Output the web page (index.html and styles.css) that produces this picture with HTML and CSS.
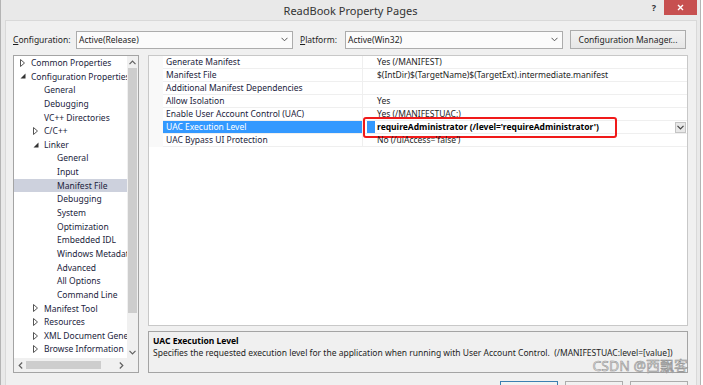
FILE: index.html
```html
<!DOCTYPE html>
<html lang="en">
<head>
  <meta charset="UTF-8" />
  <title>ReadBook Property Pages</title>
  <link rel="stylesheet" href="styles.css">
</head>
<body>

<div class="window">
  <!-- Title bar -->
  <div class="titlebar">
    <span class="title">ReadBook Property Pages</span>
    <div class="controls">
      <span class="help">?</span>
      <span class="close">
        <svg width="7" height="7" viewBox="0 0 7 7"><path d="M1 1 L6 6 M6 1 L1 6" stroke="#fff" stroke-width="1.4"/></svg>
      </span>
    </div>
  </div>

  <div class="client">
    <!-- Configuration row -->
    <div class="config-row">
      <label class="cfg-label"><u>C</u>onfiguration:</label>
      <div class="select cfg-select">
        <span>Active(Release)</span>
        <svg width="7" height="5" viewBox="0 0 7 5"><polyline points="0.5,0.8 3.5,3.8 6.5,0.8" fill="none" stroke="#555" stroke-width="1"/></svg>
      </div>
      <label class="plat-label"><u>P</u>latform:</label>
      <div class="select plat-select">
        <span>Active(Win32)</span>
        <svg width="7" height="5" viewBox="0 0 7 5"><polyline points="0.5,0.8 3.5,3.8 6.5,0.8" fill="none" stroke="#555" stroke-width="1"/></svg>
      </div>
      <button class="cfg-btn">Configuration Manager...</button>
    </div>

    <div class="main">
      <!-- Tree -->
      <div class="tree">
        <div class="tree-body">
          <ul class="tree-items">
            <li class="lv0"><span class="tw"><svg width="5" height="8" viewBox="0 0 5 8"><polygon points="0.5,0.5 4.5,4 0.5,7.5" fill="none" stroke="#555"/></svg></span>Common Properties</li>
            <li class="lv0"><span class="tw"><svg width="6" height="6" viewBox="0 0 6 6"><polygon points="5.5,0.5 5.5,5.5 0.5,5.5" fill="#333"/></svg></span>Configuration Properties</li>
            <li class="lv1"><span class="tw"></span>General</li>
            <li class="lv1"><span class="tw"></span>Debugging</li>
            <li class="lv1"><span class="tw"></span>VC++ Directories</li>
            <li class="lv1"><span class="tw"><svg width="5" height="8" viewBox="0 0 5 8"><polygon points="0.5,0.5 4.5,4 0.5,7.5" fill="none" stroke="#555"/></svg></span>C/C++</li>
            <li class="lv1"><span class="tw"><svg width="6" height="6" viewBox="0 0 6 6"><polygon points="5.5,0.5 5.5,5.5 0.5,5.5" fill="#333"/></svg></span>Linker</li>
            <li class="lv2"><span class="tw"></span>General</li>
            <li class="lv2"><span class="tw"></span>Input</li>
            <li class="lv2 active"><span class="tw"></span>Manifest File</li>
            <li class="lv2"><span class="tw"></span>Debugging</li>
            <li class="lv2"><span class="tw"></span>System</li>
            <li class="lv2"><span class="tw"></span>Optimization</li>
            <li class="lv2"><span class="tw"></span>Embedded IDL</li>
            <li class="lv2"><span class="tw"></span>Windows Metadata</li>
            <li class="lv2"><span class="tw"></span>Advanced</li>
            <li class="lv2"><span class="tw"></span>All Options</li>
            <li class="lv2"><span class="tw"></span>Command Line</li>
            <li class="lv1"><span class="tw"><svg width="5" height="8" viewBox="0 0 5 8"><polygon points="0.5,0.5 4.5,4 0.5,7.5" fill="none" stroke="#555"/></svg></span>Manifest Tool</li>
            <li class="lv1"><span class="tw"><svg width="5" height="8" viewBox="0 0 5 8"><polygon points="0.5,0.5 4.5,4 0.5,7.5" fill="none" stroke="#555"/></svg></span>Resources</li>
            <li class="lv1"><span class="tw"><svg width="5" height="8" viewBox="0 0 5 8"><polygon points="0.5,0.5 4.5,4 0.5,7.5" fill="none" stroke="#555"/></svg></span>XML Document Generator</li>
            <li class="lv1"><span class="tw"><svg width="5" height="8" viewBox="0 0 5 8"><polygon points="0.5,0.5 4.5,4 0.5,7.5" fill="none" stroke="#555"/></svg></span>Browse Information</li>
          </ul>
          <div class="vscroll">
            <div class="arrow"><svg width="7" height="5" viewBox="0 0 7 5"><polyline points="0.5,4.2 3.5,1.2 6.5,4.2" fill="none" stroke="#606060" stroke-width="1.2"/></svg></div>
            <div class="vthumb"></div>
            <div class="track"></div>
            <div class="arrow"><svg width="7" height="5" viewBox="0 0 7 5"><polyline points="0.5,0.8 3.5,3.8 6.5,0.8" fill="none" stroke="#606060" stroke-width="1.2"/></svg></div>
          </div>
        </div>
        <div class="hscroll-row">
          <div class="hscroll">
            <div class="harrow"><svg width="5" height="7" viewBox="0 0 5 7"><polyline points="4.2,0.5 1.2,3.5 4.2,6.5" fill="none" stroke="#606060" stroke-width="1.2"/></svg></div>
            <div class="hthumb"></div>
            <div class="track"></div>
            <div class="harrow"><svg width="5" height="7" viewBox="0 0 5 7"><polyline points="0.8,0.5 3.8,3.5 0.8,6.5" fill="none" stroke="#606060" stroke-width="1.2"/></svg></div>
          </div>
          <div class="corner"></div>
        </div>
      </div>

      <!-- Property grid + description -->
      <div class="right">
        <div class="grid">
          <div class="row"><div class="gutter"></div><div class="name">Generate Manifest</div><div class="value">Yes (/MANIFEST)</div></div>
          <div class="row"><div class="gutter"></div><div class="name">Manifest File</div><div class="value">$(IntDir)$(TargetName)$(TargetExt).intermediate.manifest</div></div>
          <div class="row"><div class="gutter"></div><div class="name">Additional Manifest Dependencies</div><div class="value"></div></div>
          <div class="row"><div class="gutter"></div><div class="name">Allow Isolation</div><div class="value">Yes</div></div>
          <div class="row"><div class="gutter"></div><div class="name">Enable User Account Control (UAC)</div><div class="value">Yes (/MANIFESTUAC:)</div></div>
          <div class="row selected">
            <div class="gutter"></div>
            <div class="name">UAC Execution Level</div>
            <div class="value">
              <span class="caret"></span>
              <span class="strong">requireAdministrator (/level='requireAdministrator')</span>
              <span class="drop"><svg width="7" height="5" viewBox="0 0 7 5"><polyline points="0.5,0.8 3.5,3.8 6.5,0.8" fill="none" stroke="#444" stroke-width="1.2"/></svg></span>
              <span class="redbox"></span>
            </div>
          </div>
          <div class="row"><div class="gutter"></div><div class="name">UAC Bypass UI Protection</div><div class="value">No (/uiAccess='false')</div></div>
        </div>
        <div class="desc">
          <div class="desc-title">UAC Execution Level</div>
          <div>Specifies the requested execution level for the application when running with User Account Control.&nbsp; (/MANIFESTUAC:level=[value])</div>
        </div>
      </div>
    </div>

    <div class="buttons">
      <button class="dlg-btn default">OK</button>
      <button class="dlg-btn">Cancel</button>
      <button class="dlg-btn">Apply</button>
    </div>
  </div>

  <div class="watermark">CSDN @西飘客</div>
</div>

</body>
</html>
```

FILE: styles.css
```css
* {
  margin: 0;
  padding: 0;
  box-sizing: border-box;
}

body {
  width: 703px;
  height: 385px;
  overflow: hidden;
  background: #fff;
  font-family: "Noto Sans", "Noto Sans CJK SC", sans-serif;
  font-size: 8.5px;
  color: #1e1e1e;
}

.window {
  position: relative;
  width: 701px;
  height: 385px;
  background: #e9e9e9;
  border-left: 1px solid #b4b4b4;
  border-right: 1px solid #b4b4b4;
  display: flex;
  flex-direction: column;
}

/* title bar */
.titlebar {
  height: 20px;
  display: grid;
  grid-template-columns: 1fr auto 1fr;
}

.title {
  grid-column: 2;
  font-size: 11px;
  line-height: 22px;
  color: #333;
}

.controls {
  grid-column: 3;
  justify-self: end;
  display: flex;
  align-items: flex-start;
}

.help {
  font-size: 9px;
  font-weight: bold;
  color: #333;
  line-height: 15px;
  margin-right: 8px;
}

.close {
  width: 33px;
  height: 15px;
  margin-right: 3px;
  background: #c75050;
  display: flex;
  align-items: center;
  justify-content: center;
}

/* client area */
.client {
  flex: 1;
  margin: 0 3px 0 4px;
  background: #f0f0f0;
  border: 1px solid #d9d9d9;
  border-bottom: none;
  padding: 9px 8px 0 7px;
  display: flex;
  flex-direction: column;
}

.config-row {
  height: 19px;
  display: flex;
  align-items: center;
}

.cfg-label {
  width: 63px;
}

.plat-label {
  width: 45px;
  margin-left: 7px;
}

.select {
  height: 18px;
  background: #fbfbfb;
  border: 1px solid #acacac;
  display: flex;
  align-items: center;
  justify-content: space-between;
  padding: 0 4px 0 2px;
}

.cfg-select {
  width: 217px;
}

.plat-select {
  width: 218px;
}

.cfg-btn {
  width: 116px;
  height: 19px;
  margin-left: 7px;
  font-family: inherit;
  font-size: 8.5px;
  color: #1e1e1e;
  background: linear-gradient(#f2f2f2, #e6e6e6);
  border: 1px solid #acacac;
}

.main {
  height: 318px;
  margin-top: 6px;
  display: flex;
}

/* tree */
.tree {
  width: 126px;
  border: 1px solid #a4a4a4;
  background: #fff;
  display: flex;
  flex-direction: column;
}

.tree-body {
  flex: 1;
  display: flex;
  min-height: 0;
}

.tree-items {
  flex: 1;
  list-style: none;
  overflow: hidden;
  color: #1b1d3c;
}

.tree-items li {
  height: 13.65px;
  line-height: 13.65px;
  white-space: nowrap;
  display: flex;
  align-items: center;
}

.tree-items li.lv0 { padding-left: 6px; }
.tree-items li.lv1 { padding-left: 19px; }
.tree-items li.lv2 { padding-left: 32px; }

.tree-items li.active {
  background: #cdd1dd;
}

.tw {
  width: 11px;
  flex-shrink: 0;
  display: flex;
  align-items: center;
}

.vscroll {
  width: 11px;
  background: #f0f0f0;
  display: flex;
  flex-direction: column;
}

.arrow {
  height: 12px;
  display: flex;
  align-items: center;
  justify-content: center;
}

.vthumb {
  height: 245px;
  margin: 0 1px;
  background: #cdcdcd;
}

.track {
  flex: 1;
}

.hscroll-row {
  height: 14px;
  display: flex;
}

.hscroll {
  flex: 1;
  background: #f0f0f0;
  display: flex;
  align-items: center;
}

.harrow {
  width: 12px;
  height: 14px;
  display: flex;
  align-items: center;
  justify-content: center;
}

.hthumb {
  width: 75px;
  height: 8px;
  background: #cdcdcd;
}

.corner {
  width: 11px;
  background: #f0f0f0;
}

/* property grid */
.right {
  flex: 1;
  margin-left: 9px;
  display: flex;
  flex-direction: column;
}

.grid {
  flex: 1;
  background: #fff;
  border: 1px solid #c8c8c8;
}

.row {
  height: 13px;
  display: flex;
  line-height: 12px;
}

.gutter {
  width: 14px;
  background: #f9f9f9;
}

.name {
  width: 200px;
  padding-left: 3px;
  color: #1b1d3c;
  white-space: nowrap;
  border-bottom: 1px solid #efefef;
  border-right: 1px solid #efefef;
}

.value {
  flex: 1;
  padding-left: 14px;
  white-space: nowrap;
  border-bottom: 1px solid #efefef;
  position: relative;
  display: flex;
  align-items: center;
}

.row.selected .name {
  background: #3399ff;
  color: #fff;
}

.row.selected .value {
  padding-left: 4px;
}

.caret {
  width: 8px;
  height: 12px;
  background: #3399ff;
  margin-right: 2px;
}

.strong {
  font-weight: bold;
  color: #000;
  flex: 1;
}

.drop {
  width: 11px;
  height: 11px;
  margin-right: 1px;
  background: #e8e8e8;
  border: 1px solid #c4c4c4;
  display: flex;
  align-items: center;
  justify-content: center;
}

.redbox {
  position: absolute;
  left: 0;
  top: -4px;
  width: 254px;
  height: 21px;
  border: 2.5px solid #f01a1a;
  border-radius: 3px;
}

/* description */
.desc {
  height: 42px;
  margin-top: 5px;
  border: 1px solid #a4a4a4;
  padding: 3px 4px;
  line-height: 12px;
  white-space: nowrap;
}

.desc-title {
  font-weight: bold;
  color: #000;
}

/* dialog buttons */
.buttons {
  margin-top: 8px;
  display: flex;
  justify-content: flex-end;
  gap: 7px;
}

.dlg-btn {
  width: 58px;
  height: 20px;
  font-family: inherit;
  font-size: 8.5px;
  background: linear-gradient(#f2f2f2, #e6e6e6);
  border: 1px solid #acacac;
}

.dlg-btn.default {
  border-color: #3c7fb1;
}

.watermark {
  position: absolute;
  right: 12px;
  top: 358px;
  font-family: "Noto Sans", "Noto Sans CJK SC", sans-serif;
  font-size: 14px;
  line-height: 16px;
  color: #dedede;
  -webkit-text-stroke: 0.5px #8c8c8c;
}
```
